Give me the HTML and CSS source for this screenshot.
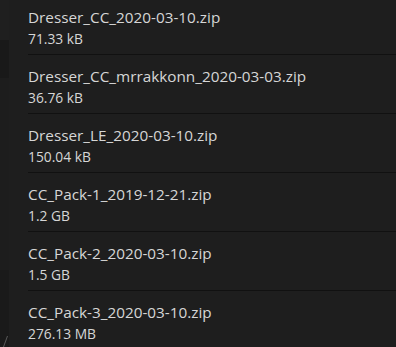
FILE: index.html
```html
<!DOCTYPE html>
<html>
<head>
<meta charset="utf-8">
<link rel="stylesheet" href="styles.css">
</head>
<body>
<div class="shell">
  <div class="edge">
    <div class="edge-a"></div>
    <div class="edge-b"></div>
    <div class="edge-c"></div>
    <div class="edge-d"></div>
    <div class="edge-e"><span class="grip"></span></div>
  </div>
  <ul class="files">
    <li class="file"><div class="name">Dresser_CC_2020-03-10.zip</div><div class="size">71.33 kB</div></li>
    <li class="file"><div class="name">Dresser_CC_mrrakkonn_2020-03-03.zip</div><div class="size">36.76 kB</div></li>
    <li class="file"><div class="name">Dresser_LE_2020-03-10.zip</div><div class="size">150.04 kB</div></li>
    <li class="file"><div class="name">CC_Pack-1_2019-12-21.zip</div><div class="size">1.2 GB</div></li>
    <li class="file"><div class="name">CC_Pack-2_2020-03-10.zip</div><div class="size">1.5 GB</div></li>
    <li class="file"><div class="name">CC_Pack-3_2020-03-10.zip</div><div class="size">276.13 MB</div></li>
  </ul>
</div>
</body>
</html>
```
FILE: styles.css
```css
html, body {
  margin: 0;
  padding: 0;
  background: #1e1e1e;
  overflow: hidden;
}
.shell {
  display: flex;
  height: 347px;
  font-family: "Open Sans", "Noto Sans", sans-serif;
  color: #d6d6d6;
}
.edge {
  width: 9px;
  display: flex;
  flex-direction: column;
  flex-shrink: 0;
}
.edge-a { height: 40px; background: #1f1f1f; }
.edge-b { height: 38px; background: #191919; }
.edge-c { height: 192px; background: #1d1d1d; }
.edge-d { height: 66px; background: #1a1a1a; }
.edge-e { flex: 1; background: #1a1a1a; position: relative; }
.grip {
  position: absolute;
  left: 5px;
  bottom: 0;
  width: 1px;
  height: 11px;
  background: #5a5a5a;
  transform: skewX(-20deg);
}
.files {
  list-style: none;
  margin: 0;
  padding: 0 0 0 19px;
  flex: 1;
}
.file {
  padding: 11px 0 5px 0;
  border-bottom: 1px solid #111111;
}
.file:first-child {
  padding-top: 7px;
}
.name {
  font-size: 15.3px;
  line-height: 21px;
  white-space: nowrap;
}
.size {
  font-size: 13.8px;
  line-height: 21px;
}
```
